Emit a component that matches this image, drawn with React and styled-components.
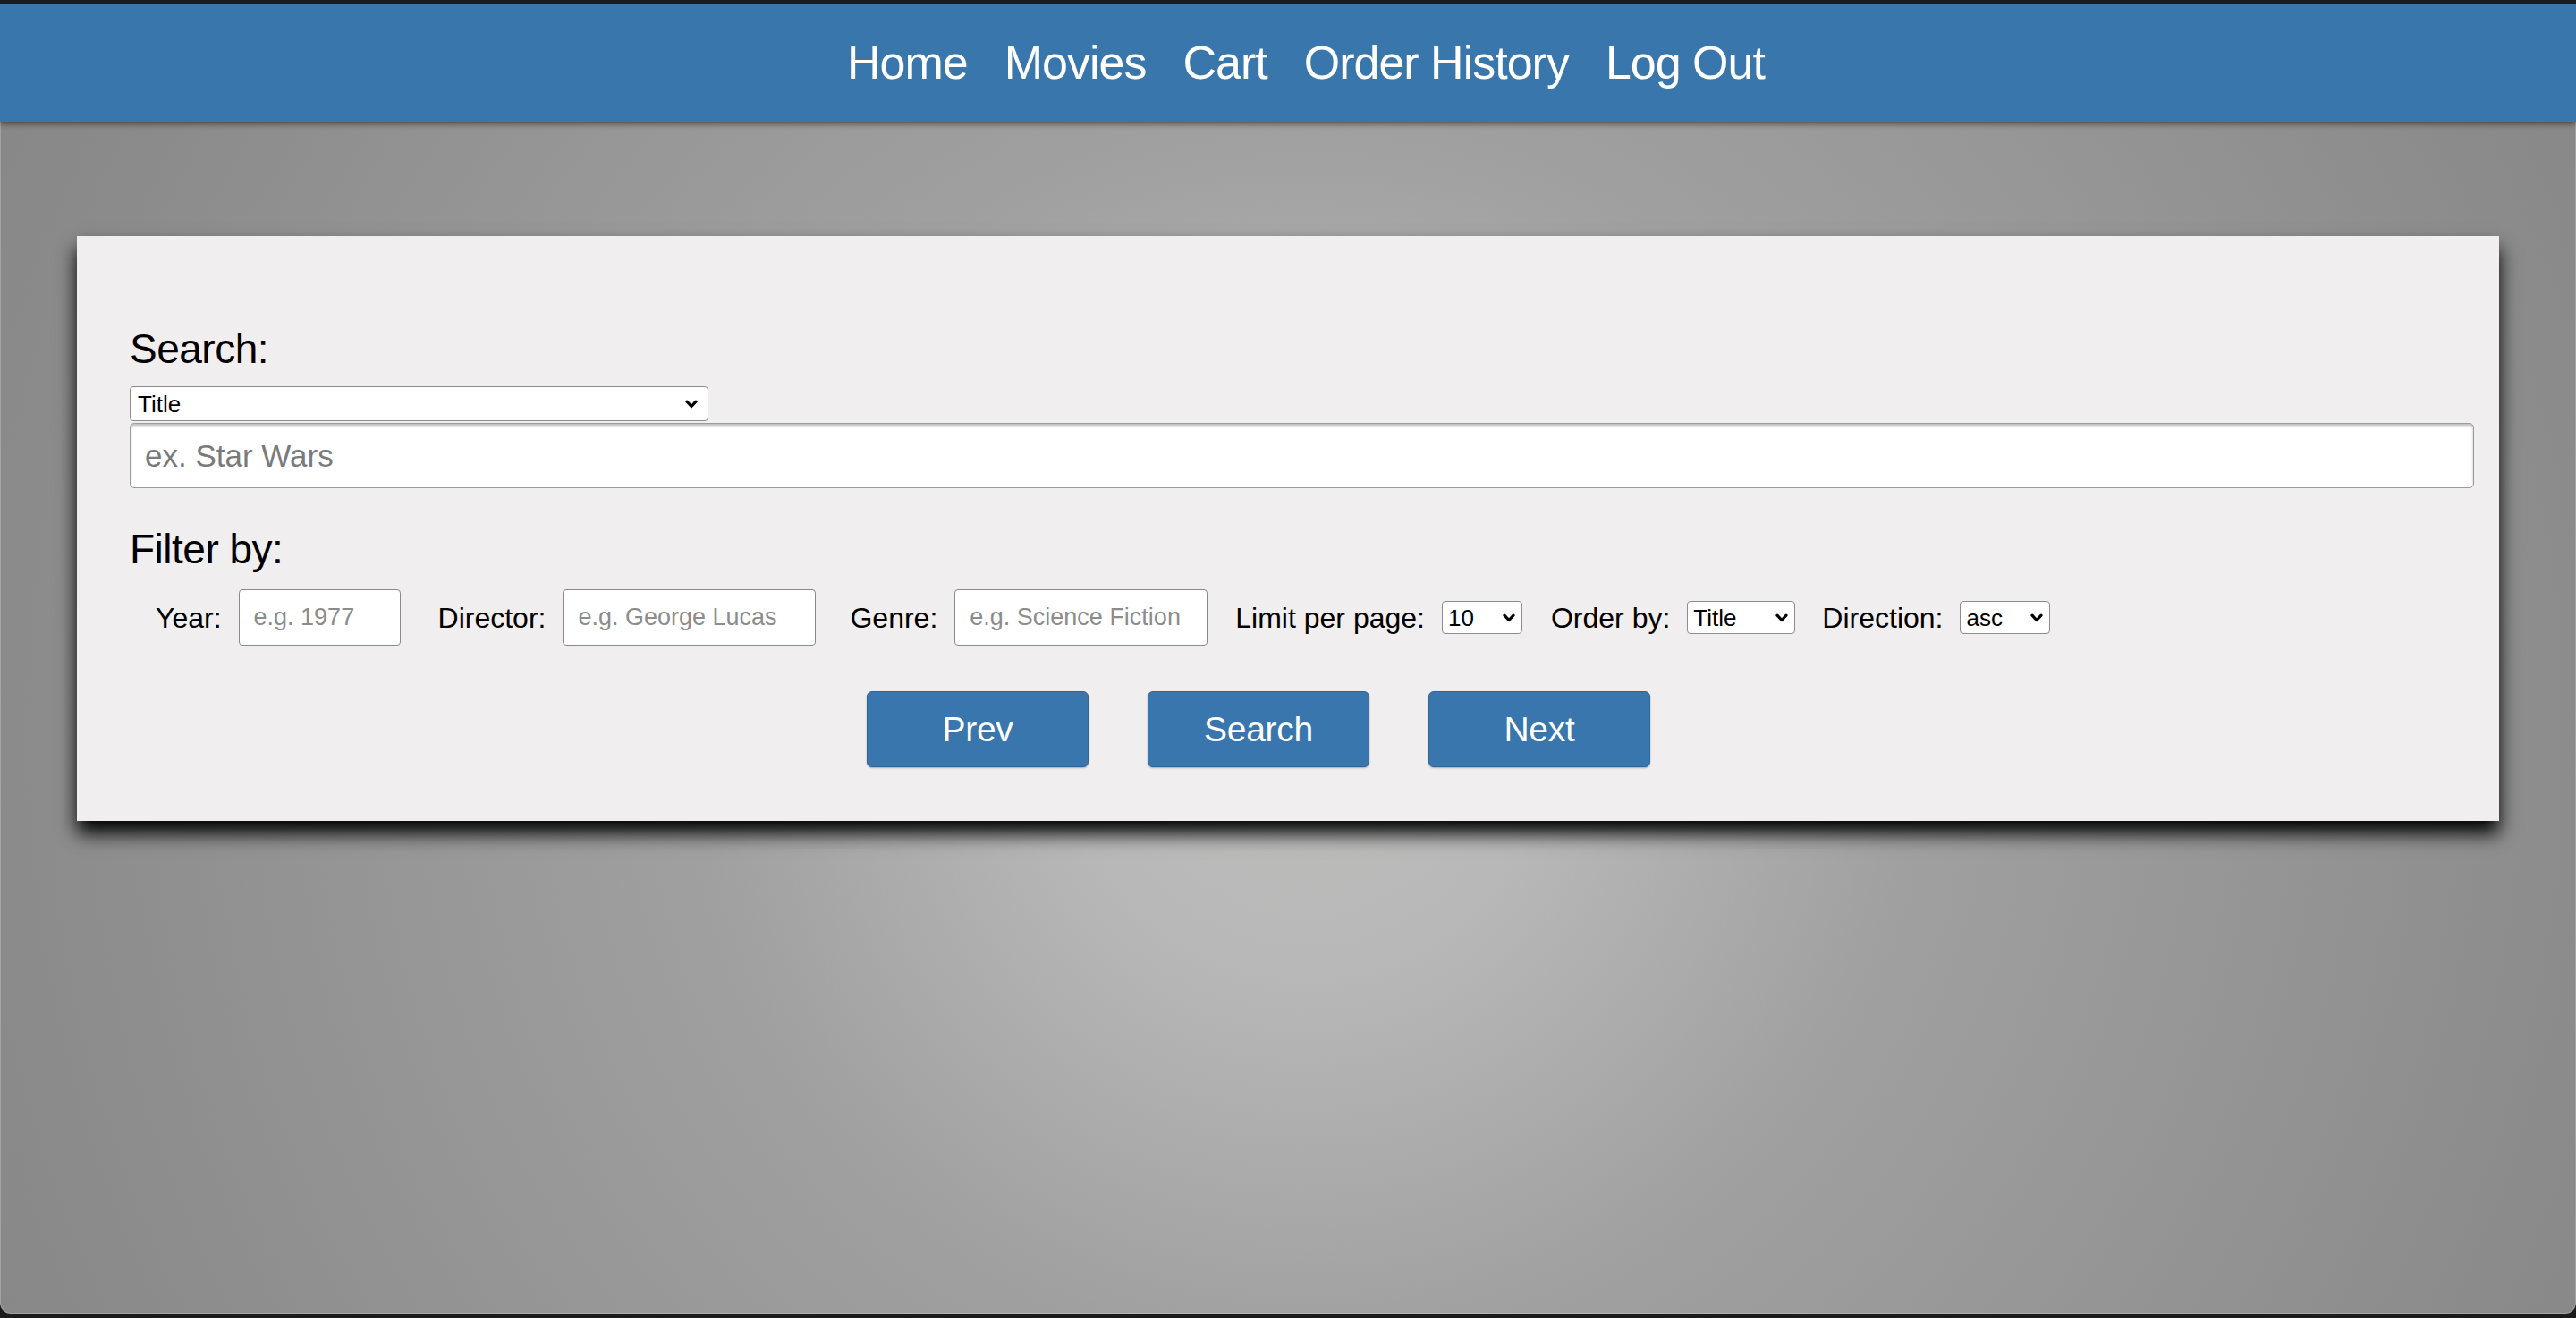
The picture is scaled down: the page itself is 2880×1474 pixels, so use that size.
import React from "react";
import styled, { createGlobalStyle } from "styled-components";

const GlobalStyle = createGlobalStyle`
  html, body {
    margin: 0;
    padding: 0;
    background: #1b1b1c;
  }
  body {
    font-family: "Liberation Sans", Arial, Helvetica, sans-serif;
    color: #000;
  }
  * { font-family: inherit; }
`;

const Window = styled.div`
  position: relative;
  margin-top: 4px;
  height: 1465px;
  display: flex;
  flex-direction: column;
  border-radius: 0 0 12px 12px;
  overflow: hidden;
  &::after {
    content: "";
    position: absolute;
    inset: 0;
    border: 1px solid rgba(255, 255, 255, 0.22);
    border-top: none;
    border-radius: 0 0 12px 12px;
    pointer-events: none;
  }
`;

const NavBar = styled.nav`
  position: relative;
  z-index: 2;
  height: 132px;
  flex: none;
  background: #3876ab;
  box-shadow: 0 3px 6px rgba(0, 0, 0, 0.45);
  display: flex;
  align-items: center;
  justify-content: center;
`;

const NavList = styled.ul`
  list-style: none;
  margin: 0;
  padding: 0 0 0 40px;
  display: flex;
  gap: 41px;
`;

const NavLink = styled.a`
  color: #fff;
  text-decoration: none;
  font-size: 52px;
  letter-spacing: -1px;
  line-height: 1;
  cursor: pointer;
`;

const Main = styled.main`
  flex: 1;
  padding: 128px 86px 0;
  background: radial-gradient(
    circle at 1460px 690px,
    #bebdbc 0px,
    #b8b8b8 260px,
    #a0a0a0 680px,
    #8b8b8b 1450px,
    #858585 1750px
  );
`;

const Card = styled.section`
  background: #f0eeef;
  padding: 103px 59px 60px;
  box-shadow: 0 14px 20px #000;
`;

const SectionLabel = styled.label`
  display: block;
  font-size: 46px;
  line-height: 46px;
  letter-spacing: -0.5px;
  margin-top: ${(p) => p.$top || 0}px;
`;

const SelectWrap = styled.span`
  position: relative;
  display: inline-flex;
  flex: none;
  width: ${(p) => p.$w}px;
  height: ${(p) => p.$h}px;
  margin-top: ${(p) => p.$top || 0}px;
`;

const NativeSelect = styled.select`
  appearance: none;
  -webkit-appearance: none;
  width: 100%;
  height: 100%;
  box-sizing: border-box;
  margin: 0;
  border: 1px solid #8d8d8d;
  border-radius: 4px;
  background: #fff;
  color: #000;
  font-size: ${(p) => p.$fs || 26}px;
  padding: 0 28px 0 ${(p) => p.$pl || 6}px;
  outline: none;
`;

const Chevron = styled.svg`
  position: absolute;
  right: ${(p) => p.$r || 10}px;
  top: 50%;
  width: 14px;
  height: 10px;
  transform: translateY(-50%);
  pointer-events: none;
`;

const Select = ({ w, h, fs, pl, top, r, value, options }) => (
  <SelectWrap $w={w} $h={h} $top={top}>
    <NativeSelect $fs={fs} $pl={pl} defaultValue={value}>
      {options.map((o) => (
        <option key={o}>{o}</option>
      ))}
    </NativeSelect>
    <Chevron $r={r} viewBox="0 0 14 10">
      <path d="M2 2.2 L7 7.5 L12 2.2" fill="none" stroke="#000" strokeWidth="3.2" strokeLinecap="round" strokeLinejoin="round" />
    </Chevron>
  </SelectWrap>
);

const SearchInput = styled.input`
  display: block;
  box-sizing: content-box;
  width: 100%;
  height: 71px;
  margin: 2px 0 0;
  padding: 0 13px 0 16px;
  border: 1px solid #9c9c9c;
  border-radius: 5px;
  background: #fff;
  box-shadow: inset 0 2px 3px rgba(0, 0, 0, 0.28);
  font-size: 35px;
  color: #000;
  outline: none;
  &::placeholder {
    color: #7a7a7a;
  }
`;

const FilterRow = styled.div`
  display: flex;
  align-items: center;
  margin-top: 22px;
  padding-left: 29px;
`;

const Field = styled.div`
  display: flex;
  align-items: center;
  gap: 19px;
  margin-right: ${(p) => p.$after || 0}px;
`;

const FieldLabel = styled.label`
  font-size: 32px;
  line-height: 1;
  white-space: nowrap;
`;

const FilterInput = styled.input`
  box-sizing: border-box;
  width: ${(p) => p.$w}px;
  height: 63px;
  margin: 0;
  padding: 0 0 0 16px;
  border: 1px solid #8a8a8a;
  border-radius: 4px;
  background: #fff;
  font-size: 27px;
  color: #000;
  outline: none;
  &::placeholder {
    color: #8c8c8c;
  }
`;

const ButtonRow = styled.div`
  display: flex;
  justify-content: center;
  margin-top: 51px;
`;

const ActionButton = styled.button`
  width: 248px;
  height: 85px;
  margin: 0 66px 0 0;
  padding: 0;
  background: #3876ad;
  border: 1px solid #2f6799;
  border-radius: 6px;
  box-shadow: 0 1px 2px rgba(0, 0, 0, 0.3);
  color: #fff;
  font-size: 39px;
  letter-spacing: -0.3px;
  cursor: pointer;
`;

const navItems = ["Home", "Movies", "Cart", "Order History", "Log Out"];

export default function App() {
  return (
    <>
      <GlobalStyle />
      <Window>
        <NavBar>
          <NavList>
            {navItems.map((n) => (
              <li key={n}>
                <NavLink>{n}</NavLink>
              </li>
            ))}
          </NavList>
        </NavBar>
        <Main>
          <Card>
            <SectionLabel>Search:</SectionLabel>
            <Select
              w={647}
              h={39}
              fs={26}
              pl={8}
              top={19}
              r={12}
              value="Title"
              options={["Title", "Director", "Star", "Genre", "Year"]}
            />
            <SearchInput placeholder="ex. Star Wars" />
            <SectionLabel $top={45}>Filter by:</SectionLabel>
            <FilterRow>
              <Field $after={42}>
                <FieldLabel>Year:</FieldLabel>
                <FilterInput $w={181} placeholder="e.g. 1977" />
              </Field>
              <Field $after={38}>
                <FieldLabel>Director:</FieldLabel>
                <FilterInput $w={283} placeholder="e.g. George Lucas" />
              </Field>
              <Field $after={31}>
                <FieldLabel>Genre:</FieldLabel>
                <FilterInput $w={283} placeholder="e.g. Science Fiction" />
              </Field>
              <Field $after={32}>
                <FieldLabel>Limit per page:</FieldLabel>
                <Select w={90} h={37} fs={26} pl={6} r={8} value="10" options={["10", "25", "50", "100"]} />
              </Field>
              <Field $after={30}>
                <FieldLabel>Order by:</FieldLabel>
                <Select w={121} h={37} fs={26} pl={6} r={8} value="Title" options={["Title", "Rating"]} />
              </Field>
              <Field>
                <FieldLabel>Direction:</FieldLabel>
                <Select w={101} h={37} fs={26} pl={6} r={8} value="asc" options={["asc", "desc"]} />
              </Field>
            </FilterRow>
            <ButtonRow>
              <ActionButton>Prev</ActionButton>
              <ActionButton>Search</ActionButton>
              <ActionButton>Next</ActionButton>
            </ButtonRow>
          </Card>
        </Main>
      </Window>
    </>
  );
}
